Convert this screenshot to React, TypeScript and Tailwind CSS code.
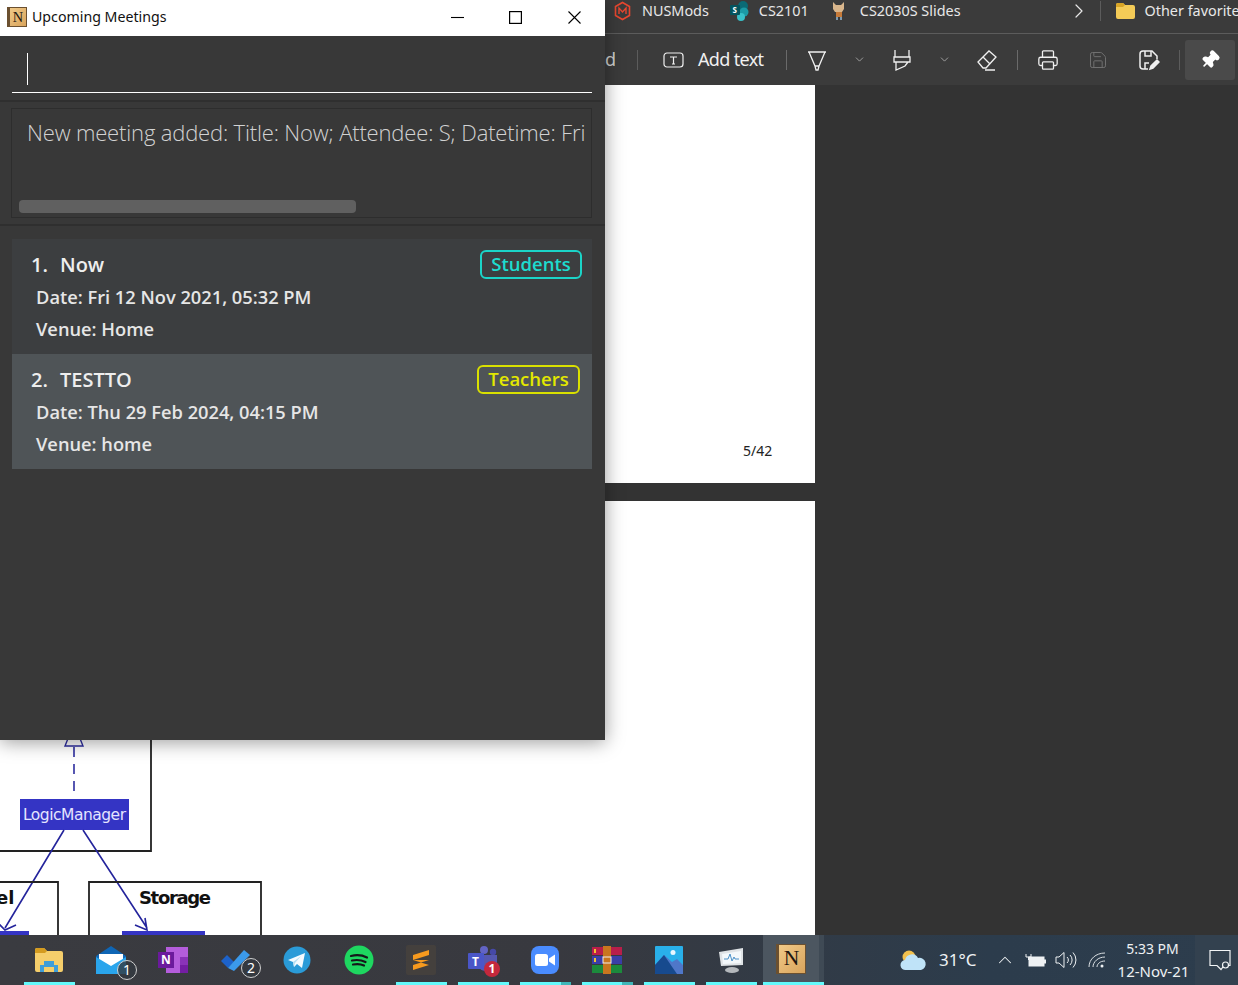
import type { ReactNode } from "react";
import { ChevronRight, ChevronDown, ChevronUp, Printer, Save, Pin } from "lucide-react";

const UI_FONT = "font-['Open_Sans',sans-serif]";

const MEETINGS = [
  {
    id: 1,
    title: "Now",
    date: "Fri 12 Nov 2021, 05:32 PM",
    venue: "Home",
    tag: "Students",
    rowBg: "bg-[#3c3e40]",
    tagClass: "border-[#1bd4c8] text-[#1ddccf] w-[102px] mr-[10px]",
  },
  {
    id: 2,
    title: "TESTTO",
    date: "Thu 29 Feb 2024, 04:15 PM",
    venue: "home",
    tag: "Teachers",
    rowBg: "bg-[#4f5457]",
    tagClass: "border-[#d9e000] text-[#e3e800] w-[103px] mr-[12px]",
  },
];

function NotionIcon({ size = 32 }: { size?: number }) {
  return (
    <div
      className="flex items-center justify-center bg-[linear-gradient(135deg,#f0c988,#d9a45c)] border border-[#6b5030] border-l-[3px] font-['Liberation_Serif',serif] text-[#1f1710] leading-none"
      style={{ width: size, height: size, fontSize: size * 0.72 }}
    >
      N
    </div>
  );
}

function MeetingRow({ m }: { m: (typeof MEETINGS)[number] }) {
  return (
    <div className={`h-[115px] ${m.rowBg} relative`}>
      <div className="flex items-start justify-between pt-[11px]">
        <div className="pl-[19px] h-[29px] flex items-center text-[20px] font-semibold text-[#eeeeee] whitespace-nowrap">
          <span className="w-[29px]">{m.id}.</span>
          <span>{m.title}</span>
        </div>
        <div
          className={`h-[29px] pb-[2px] rounded-[6px] border-2 flex items-center justify-center text-[18.5px] font-semibold ${m.tagClass}`}
        >
          {m.tag}
        </div>
      </div>
      <div className="pl-[24px] mt-[2px] text-[18.25px] font-semibold text-[#e6e6e6] leading-[32px]">
        <div>Date: {m.date}</div>
        <div>Venue: {m.venue}</div>
      </div>
    </div>
  );
}

function MeetingsWindow() {
  return (
    <div
      className={`absolute left-0 top-0 w-[605px] h-[740px] bg-[#383838] flex flex-col shadow-[0_2px_18px_rgba(0,0,0,0.4)] ${UI_FONT}`}
    >
      <div className="h-[36px] bg-white flex items-center shrink-0">
        <div className="ml-[7px] mb-[2px]">
          <NotionIcon size={20} />
        </div>
        <span className="ml-[5px] mb-[3px] text-[14.2px] text-[#111] font-['Noto_Sans',sans-serif]">Upcoming Meetings</span>
        <div className="ml-auto flex items-center pb-[2px] text-black">
          <div className="w-[58px] flex justify-center">
            <svg width="13" height="13" viewBox="0 0 13 13" stroke="currentColor" strokeWidth="1.100">
              <path d="M0 6.500h13" />
            </svg>
          </div>
          <div className="w-[58px] flex justify-center">
            <svg width="13" height="13" viewBox="0 0 13 13" fill="none" stroke="currentColor" strokeWidth="1.200">
              <rect x="0.600" y="0.600" width="11.800" height="11.800" />
            </svg>
          </div>
          <div className="w-[60px] mr-[1px] flex justify-center">
            <svg width="13" height="13" viewBox="0 0 13 13" stroke="currentColor" strokeWidth="1.100">
              <path d="M0.500 0.500 12.500 12.500M12.500 0.500 0.500 12.500" />
            </svg>
          </div>
        </div>
      </div>

      <div className="h-[66px] shrink-0 border-b-2 border-[#2f2f2f] pl-[12px] pr-[13px] pt-[17px]">
        <div className="h-[40px] border-b border-white pl-[15px]">
          <div className="w-px h-[32px] bg-white" />
        </div>
      </div>

      <div className="h-[124px] shrink-0 border-b-2 border-[#2f2f2f] pt-[6px] pl-[11px] pr-[13px]">
        <div className="h-[110px] border border-[#2d2d2d] relative overflow-hidden">
          <div className="pl-[15px] pt-[7px] text-[22px] font-light text-[#d2d2d2] whitespace-nowrap tracking-[-0.16px]">
            New meeting added: Title: Now; Attendee: S; Datetime: Fri 12 Nov 2021, 05:32 PM
          </div>
          <div className="absolute left-[7px] bottom-[4px] w-[337px] h-[13px] rounded-[4px] bg-[#606060]" />
        </div>
      </div>

      <div className="pt-[13px] pl-[12px] pr-[13px]">
        {MEETINGS.map((m) => (
          <MeetingRow key={m.id} m={m} />
        ))}
      </div>
    </div>
  );
}

function Bookmark({ icon, label, className }: { icon: ReactNode; label: string; className: string }) {
  return (
    <div className={`flex items-center shrink-0 ${className}`}>
      {icon}
      <span className="text-[14.4px] text-[#e8e8e8] font-['Noto_Sans',sans-serif] whitespace-nowrap">{label}</span>
    </div>
  );
}

function BrowserChrome() {
  return (
    <div className="shrink-0 bg-[#3b3b3b] pl-[605px] font-['Noto_Sans',sans-serif]">
      <div className="h-[34px] border-b border-[#5c5c5c] flex items-center pb-[11px] overflow-hidden">
        <Bookmark
          className="ml-[8px] gap-[10px]"
          label="NUSMods"
          icon={
            <svg width="19" height="20" viewBox="0 0 19 20" fill="none" stroke="#e8472f" strokeWidth="1.6">
              <path d="M9.500 1.500 16.500 5.500v9l-7 4-7-4v-9z" />
              <path d="M6 13V7l3.500 4L13 7v6" strokeWidth="1.400" />
            </svg>
          }
        />
        <Bookmark
          className="ml-[21px] gap-[9px]"
          label="CS2101"
          icon={
            <svg width="20" height="22" viewBox="0 0 20 22">
              <circle cx="13" cy="6" r="5" fill="#0b6a75" />
              <circle cx="14" cy="12" r="4.500" fill="#1b9aa5" />
              <circle cx="11" cy="17" r="4" fill="#38c1c9" />
              <rect x="0" y="5" width="10" height="10" rx="1" fill="#04545e" />
              <text x="2.600" y="13" fontSize="8" fontWeight="700" fill="#fff">S</text>
            </svg>
          }
        />
        <Bookmark
          className="ml-[21px] gap-[12px]"
          label="CS2030S Slides"
          icon={
            <svg width="18" height="22" viewBox="0 0 18 22">
              <path d="M3 2l3 3h5l3-3v7l-2 3H5L3 9z" fill="#d9b68c" />
              <rect x="6" y="12" width="6" height="5" fill="#c77b3a" />
              <rect x="6" y="17" width="2" height="3" fill="#7f9bb0" />
              <rect x="10" y="17" width="2" height="3" fill="#7f9bb0" />
            </svg>
          }
        />
        <ChevronRight size={24} strokeWidth={1.2} className="ml-[106px] shrink-0 text-[#e8e8e8]" />
        <div className="w-px h-[20px] shrink-0 bg-[#5c5c5c] ml-[9px]" />
        <Bookmark
          className="ml-[14px] gap-[9px]"
          label="Other favorites"
          icon={
            <svg width="21" height="20" viewBox="0 0 21 20">
              <path d="M1 4a2 2 0 0 1 2-2h5l2 2h8a2 2 0 0 1 2 2v10a2 2 0 0 1-2 2H3a2 2 0 0 1-2-2z" fill="#f4cb57" />
              <path d="M1 4a2 2 0 0 1 2-2h5l2 2-2 2H1z" fill="#d9a526" />
            </svg>
          }
        />
      </div>
      <div className="h-[51px] flex items-center text-[#f0f0f0]">
        <span className="text-[18px] w-[10px] overflow-hidden text-[#cfcfcf]">d</span>
        <div className="w-px h-[20px] bg-[#5c5c5c] ml-[22px]" />
        <svg className="ml-[25px]" width="21" height="16" viewBox="0 0 21 16" fill="none" stroke="#f0f0f0" strokeWidth="1.2">
          <rect x="1" y="1" width="19" height="14" rx="3" />
          <path d="M7 5h7M10.500 5v7M9 12h3" />
        </svg>
        <span className="ml-[14px] text-[18px] tracking-[-0.65px] whitespace-nowrap">Add text</span>
        <div className="w-px h-[20px] bg-[#6a6a6a] ml-[23px]" />
        <svg className="ml-[20px]" width="20" height="22" viewBox="0 0 20 22" fill="none" stroke="#f0f0f0" strokeWidth="1.3">
          <path d="M1 3h18M2 3l6 14h4l6-14M8 17l1 4h2l1-4" />
        </svg>
        <ChevronDown size={13} strokeWidth={1.2} className="ml-[26px] text-[#cfcfcf]" />
        <svg className="ml-[26px]" width="20" height="22" viewBox="0 0 20 22" fill="none" stroke="#f0f0f0" strokeWidth="1.3">
          <path d="M3 1v7h14V1M2 8h16v5H2zM4 13v8l9-4 3-4" />
        </svg>
        <ChevronDown size={13} strokeWidth={1.2} className="ml-[26px] text-[#cfcfcf]" />
        <svg className="ml-[25px]" width="22" height="22" viewBox="0 0 22 22" fill="none" stroke="#f0f0f0" strokeWidth="1.3">
          <path d="M2 13 13 2l7 6-10 11H7zM7 8l7 7M9 21h10" />
        </svg>
        <div className="w-px h-[20px] bg-[#6a6a6a] ml-[19px]" />
        <Printer size={22} strokeWidth={1.4} className="ml-[19px]" />
        <Save size={20} strokeWidth={1.2} className="ml-[29px] text-[#707070]" />
        <svg className="ml-[30px]" width="22" height="22" viewBox="0 0 22 22" fill="none" stroke="#f0f0f0" strokeWidth="1.5">
          <path d="M10 20H5a3 3 0 0 1-3-3V5a3 3 0 0 1 3-3h9l5 5v3" />
          <path d="M7 2v5h6V2M7 20v-6h4" />
          <path d="M12 20l1-3 6-6 2 2-6 6z" fill="#f0f0f0" />
        </svg>
        <div className="w-px h-[20px] bg-[#5c5c5c] ml-[19px]" />
        <div className="w-[50px] h-[40px] ml-[5px] rounded-[3px] bg-[#4a4a4a] flex items-center justify-center">
          <Pin size={20} fill="#ffffff" className="text-white rotate-45" />
        </div>
      </div>
    </div>
  );
}

function Diagram() {
  return (
    <svg className="absolute left-0 bottom-0" width="300" height="200" viewBox="0 735 300 200" fill="none">
      <path d="M151 735v116H0" stroke="#222" strokeWidth="1.800" />
      <path d="M69 736 65 746h18l-4-10" stroke="#2d2d9f" strokeWidth="1.400" />
      <path d="M74 747v46" stroke="#2d2d9f" strokeWidth="1.6" strokeDasharray="10 7" />
      <rect x="20" y="799" width="109" height="31" fill="#3434c4" />
      <text x="74.500" y="820" textAnchor="middle" fontSize="15.500" fill="#e4e4ff" fontFamily="'DejaVu Sans', sans-serif" textLength="103">
        LogicManager
      </text>
      <path d="M64 830 5 928M-2 923l7 7 11-5" stroke="#24249c" strokeWidth="1.600" />
      <path d="M83 830l64 98M135 925l12 5-2-12" stroke="#24249c" strokeWidth="1.600" />
      <path d="M0 882h58v53" stroke="#222" strokeWidth="1.800" />
      <path d="M89 935v-53h172v53" stroke="#222" strokeWidth="1.800" />
      <text x="-4" y="904" fontSize="18" fontWeight="700" fill="#111" fontFamily="'DejaVu Sans', sans-serif">el</text>
      <text x="175" y="904" textAnchor="middle" fontSize="18" fontWeight="700" fill="#111" fontFamily="'DejaVu Sans', sans-serif" textLength="72">
        Storage
      </text>
      <rect x="0" y="931" width="29" height="4" fill="#3434c4" />
      <rect x="122" y="931" width="83" height="4" fill="#3434c4" />
    </svg>
  );
}

function PdfPages() {
  return (
    <div className="flex-1 min-h-0 overflow-hidden bg-[#333333] flex flex-col gap-[18px]">
      <div className="h-[398px] shrink-0 w-[815px] bg-white relative">
        <span className="absolute left-[743px] top-[355px] text-[14px] text-[#222] font-['Noto_Sans',sans-serif]">5/42</span>
      </div>
      <div className="flex-1 min-h-0 w-[815px] bg-white relative">
        <Diagram />
      </div>
    </div>
  );
}

const TASK_ICONS: { key: string; underline?: string; icon: ReactNode }[] = [
  {
    key: "explorer",
    underline: "bg-[#63f9fb]",
    icon: (
      <svg width="28" height="24" viewBox="0 0 28 24">
        <path d="M0 2a2 2 0 0 1 2-2h7l3 3h14a2 2 0 0 1 2 2v17a2 2 0 0 1-2 2H2a2 2 0 0 1-2-2z" fill="#f5ce6b" />
        <path d="M0 2a2 2 0 0 1 2-2h7l3 3-2 2H0z" fill="#d49b1f" />
        <path d="M5 24v-7h4v-4h10v4h4v7h-4v-5H9v5z" fill="#3f9ed9" />
      </svg>
    ),
  },
  {
    key: "mail",
    icon: (
      <div className="relative">
        <svg width="30" height="28" viewBox="0 0 30 28">
          <path d="M0 10 15 0l15 10v18H0z" fill="#0f66b5" />
          <path d="M3 8h24v8l-12 7-12-7z" fill="#fff" />
          <path d="M0 11l15 9 15-9v17H0z" fill="#2aa5ec" />
        </svg>
        <div className="absolute -right-[11px] -bottom-[6px] w-[20px] h-[20px] rounded-full border border-[#cfcfcf] bg-[#333a40]/80 text-[14px] text-white flex items-center justify-center">
          1
        </div>
      </div>
    ),
  },
  {
    key: "onenote",
    icon: (
      <div className="relative w-[30px] h-[26px]">
        <div className="absolute right-0 top-0 w-[22px] h-[26px] bg-[#b45ddc] flex flex-col justify-end">
          <div className="h-[8px] w-[8px] ml-auto bg-[#8a33b8]" />
          <div className="h-[8px] w-[8px] ml-auto bg-[#741ea3]" />
        </div>
        <div className="absolute left-0 top-[5px] w-[16px] h-[16px] bg-[#6b1a9c] text-white text-[12px] font-bold flex items-center justify-center">
          N
        </div>
      </div>
    ),
  },
  {
    key: "todo",
    icon: (
      <div className="relative">
        <svg width="30" height="24" viewBox="0 0 30 24">
          <path d="M1 13 7 7l7 7-6 6z" fill="#1d62c9" />
          <path d="M8 20 24 2l6 5-16 16z" fill="#3b9aeb" />
        </svg>
        <div className="absolute -right-[11px] -bottom-[6px] w-[20px] h-[20px] rounded-full border border-[#cfcfcf] bg-[#333a40]/80 text-[14px] text-white flex items-center justify-center">
          2
        </div>
      </div>
    ),
  },
  {
    key: "telegram",
    icon: (
      <svg width="28" height="28" viewBox="0 0 28 28">
        <circle cx="14" cy="14" r="13.500" fill="#2a9bd8" />
        <path d="M5 14 22 7l-3 15-5-4-3 3-1-5z" fill="#f4fbff" />
        <path d="M10 16l8-6-6 7-1 4z" fill="#b6dff3" />
      </svg>
    ),
  },
  {
    key: "spotify",
    icon: (
      <svg width="30" height="30" viewBox="0 0 30 30" fill="none">
        <circle cx="15" cy="15" r="14.500" fill="#1ed760" />
        <path d="M7 11c6-1.500 11-1 16 1.500M8 15.500c5-1 9-.7 13.500 1.500M9 19.500c4-.8 8-.5 11 1" stroke="#15171a" strokeWidth="2.200" strokeLinecap="round" />
      </svg>
    ),
  },
  {
    key: "sublime",
    underline: "bg-[#63f9fb]",
    icon: (
      <div className="w-[30px] h-[30px] rounded-[2px] bg-[#44403d] flex items-center justify-center">
        <svg width="18" height="22" viewBox="0 0 18 22">
          <path d="M17 1v5L1 11V6zM1 11l16 5v-5zM17 16 1 21v-5l16-5z" fill="#f79a1e" />
        </svg>
      </div>
    ),
  },
  {
    key: "teams",
    underline: "bg-[#63f9fb]",
    icon: (
      <div className="relative w-[30px] h-[28px]">
        <svg width="30" height="28" viewBox="0 0 30 28">
          <circle cx="16" cy="4" r="4" fill="#6264c4" />
          <circle cx="25" cy="6" r="3.200" fill="#4649a8" />
          <path d="M11 9h18v10a6 6 0 0 1-6 6h-6a6 6 0 0 1-6-6z" fill="#5558b0" />
          <rect x="0" y="7" width="16" height="16" rx="1" fill="#4a56c8" />
          <text x="4" y="19.500" fontSize="12" fontWeight="700" fill="#fff">T</text>
        </svg>
        <div className="absolute -right-[2px] -bottom-[3px] w-[16px] h-[16px] rounded-full bg-[#c4283c] text-white text-[12px] font-bold flex items-center justify-center">
          1
        </div>
      </div>
    ),
  },
  {
    key: "zoom",
    underline: "bg-[linear-gradient(90deg,#63f9fb_0,#63f9fb_80%,#3fb6b8_80%)]",
    icon: (
      <div className="w-[28px] h-[28px] rounded-[8px] bg-[#4a8cff] flex items-center justify-center">
        <svg width="20" height="12" viewBox="0 0 20 12">
          <rect x="0" y="0" width="13" height="12" rx="2.500" fill="#fff" />
          <path d="M14 4.500 20 0.500v11l-6-4z" fill="#fff" />
        </svg>
      </div>
    ),
  },
  {
    key: "winrar",
    underline: "bg-[linear-gradient(90deg,#63f9fb_0,#63f9fb_78%,#3fb6b8_78%)]",
    icon: (
      <svg width="30" height="28" viewBox="0 0 30 28">
        <rect x="0" y="1" width="30" height="8" fill="#b81e4a" />
        <rect x="0" y="10" width="30" height="8" fill="#3a3ea8" />
        <rect x="0" y="19" width="30" height="8" fill="#1c8a3c" />
        <rect x="11" y="0" width="8" height="28" fill="#c9761f" />
        <rect x="11" y="11" width="8" height="6" fill="none" stroke="#eee" strokeWidth="1" />
        <rect x="2" y="3" width="2" height="4" fill="#f1c232" />
        <rect x="2" y="12" width="2" height="4" fill="#f1c232" />
      </svg>
    ),
  },
  {
    key: "photos",
    underline: "bg-[#63f9fb]",
    icon: (
      <svg width="28" height="28" viewBox="0 0 28 28">
        <rect width="28" height="28" rx="1" fill="#29b0ea" />
        <circle cx="18" cy="6.500" r="2.500" fill="#e8f7ff" />
        <path d="M0 19 9 9l8 7 5-3 6 6v9H0z" fill="#4f77c9" />
        <path d="M0 19 9 9l13 19H0z" fill="#174a8e" />
      </svg>
    ),
  },
  {
    key: "perfmon",
    underline: "bg-[#63f9fb]",
    icon: (
      <svg width="28" height="28" viewBox="0 0 28 28" fill="none">
        <ellipse cx="15" cy="24" rx="7" ry="3" fill="#b4b8bc" />
        <path d="M2 6l24-4v17L4 20z" fill="#dfe3e6" />
        <path d="M5 8l19-3v12L6 18z" fill="#f3f8fb" />
        <path d="M7 13h4l2-5 2 7 2-4 1 2h4" stroke="#4a90c8" strokeWidth="1" />
      </svg>
    ),
  },
];

function Taskbar() {
  return (
    <div className="h-[50px] shrink-0 flex bg-[linear-gradient(90deg,#3a3b40_0%,#38393f_45%,#2c3c4c_80%,#2d3d4d_100%)] text-white font-['Noto_Sans',sans-serif]">
      <div className="flex pl-[19px]">
        {TASK_ICONS.map((t) => (
          <div key={t.key} className="w-[62px] h-[50px] flex flex-col items-center pr-[1px]">
            <div className="h-[47px] w-full flex items-center justify-center pt-[2px] pr-[1px]">{t.icon}</div>
            <div className={`h-[3px] w-[51px] ${t.underline ?? ""}`} />
          </div>
        ))}
      </div>
      <div className="w-[61px] h-[50px] flex flex-col bg-[#4c5660] border-r-[5px] border-[#3f4a55]">
        <div className="h-[47px] flex items-center justify-center pr-[1px]">
          <NotionIcon size={30} />
        </div>
        <div className="h-[3px] bg-[#63f9fb] -mr-[5px]" />
      </div>

      <div className="flex items-center ml-[76px]">
        <svg width="27" height="21" viewBox="0 0 27 21">
          <circle cx="9" cy="7" r="6.500" fill="#f2c14e" />
          <path d="M6 20a5 5 0 0 1-1-10 7 7 0 0 1 13-2 6 6 0 0 1 3 12z" fill="#bfe3f8" />
        </svg>
        <span className="ml-[12px] text-[17px] text-[#eef1f3]">31°C</span>
        <ChevronUp size={22} strokeWidth={1.1} className="ml-[18px] text-[#eef1f3]" />
        <svg className="ml-[9px]" width="21" height="14" viewBox="0 0 21 14" fill="none" stroke="#eef1f3">
          <path d="M1 1v3h5V1M3.500 4v3" />
          <rect x="4" y="4" width="15" height="9" fill="#eef1f3" />
          <rect x="19" y="7" width="2" height="3" fill="#eef1f3" />
        </svg>
        <svg className="ml-[9px]" width="22" height="18" viewBox="0 0 22 18" fill="none" stroke="#eef1f3" strokeWidth="1">
          <path d="M1 6h3l5-4.500v15L4 12H1zM12 6a4 4 0 0 1 0 6M15 4a7 7 0 0 1 0 10M18 1.500a11 11 0 0 1 0 15" />
        </svg>
        <svg className="ml-[11px]" width="18" height="16" viewBox="0 0 18 16" fill="none" stroke="#d9dee2" strokeWidth="1">
          <path d="M1 15C1 7 8 1 17 1M5 15c0-5 5-10 12-10M9 15c0-3 3-6 8-6" />
          <circle cx="14" cy="14" r="1.500" fill="#eef1f3" stroke="none" />
        </svg>
      </div>
      <div className="ml-[11px] w-[72px] flex flex-col items-center justify-center leading-[23px] text-[#eef1f3] whitespace-nowrap">
        <span className="text-[14px] mr-[2px]">5:33 PM</span>
        <span className="text-[15px]">12-Nov-21</span>
      </div>
      <div className="ml-auto w-[43px] bg-[#33414f] flex items-center justify-center pl-[6px]">
        <svg width="22" height="22" viewBox="0 0 22 22" fill="none" stroke="#f2f4f6" strokeWidth="1.200">
          <path d="M1 1.500h20v15h-6l-3 4-4-4H1z" />
          <circle cx="16.500" cy="16" r="3" fill="#33414f" />
        </svg>
      </div>
    </div>
  );
}

export default function App() {
  return (
    <div className="relative w-[1238px] h-[985px] overflow-hidden flex flex-col bg-[#333333]">
      <BrowserChrome />
      <PdfPages />
      <Taskbar />
      <MeetingsWindow />
    </div>
  );
}
